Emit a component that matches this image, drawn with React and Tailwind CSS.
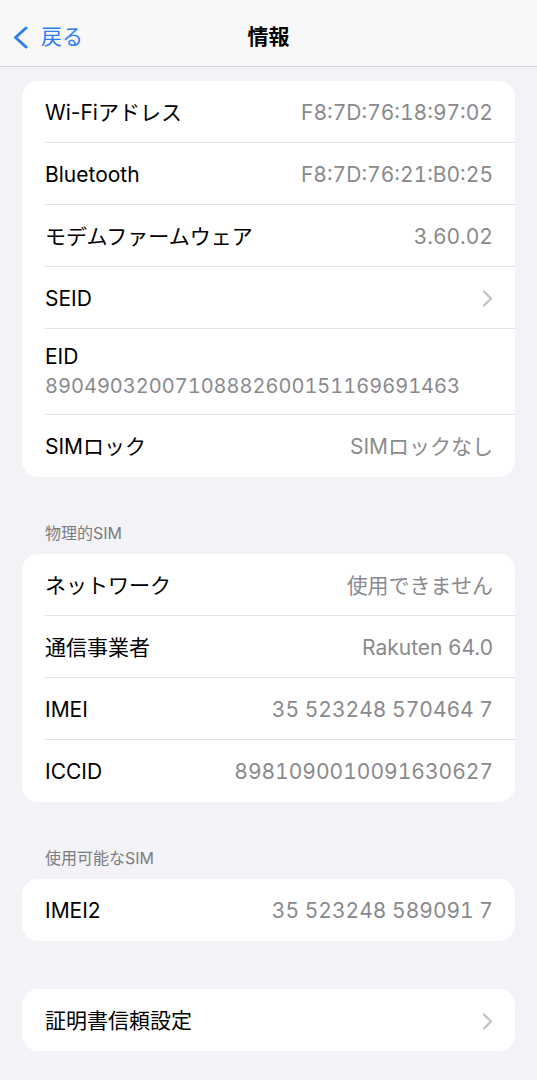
import { Fragment } from "react"

const FONT = { fontFamily: '"Inter", "Noto Sans CJK JP", sans-serif' }

const Chevron = () => (
  <svg width="11" height="17" viewBox="0 0 11 17" fill="none">
    <path d="M2 1.5 L9 8.5 L2 15.5" stroke="#c4c4c7" strokeWidth="2.4" strokeLinecap="round" strokeLinejoin="round" />
  </svg>
)

const Row = ({ label, value, chevron, mono, last }) => (
  <div className="pl-[23px]">
    <div className={`h-[62px] pt-[2px] flex items-center justify-between pr-[22px] ${last ? "" : "border-b border-[#e2e2e6]"}`}>
      <span className="text-[21px] text-black">{label}</span>
      {chevron ? (
        <Chevron />
      ) : (
        <span className={`text-[21px] text-[#8a8a8e] ${mono ? "tabular-nums" : ""}`}>{value}</span>
      )}
    </div>
  </div>
)

const Card = ({ children, className = "" }) => (
  <div className={`mx-[22px] bg-white rounded-[16px] overflow-hidden ${className}`}>{children}</div>
)

const SectionTitle = ({ children }) => (
  <p className="mt-[46px] mb-[11px] px-[45px] text-[16px] leading-[20px] text-[#7c7c80]">{children}</p>
)

const physical = [
  { label: "ネットワーク", value: "使用できません" },
  { label: "通信事業者", value: "Rakuten 64.0" },
  { label: "IMEI", value: "35 523248 570464 7", mono: true },
  { label: "ICCID", value: "8981090010091630627", mono: true },
]

export default function App() {
  return (
    <div className="min-h-[1080px] bg-[#f2f2f7] pb-[31px]" style={FONT}>
      <div className="relative h-[67px] pt-[8px] bg-[#f8f8f9] border-b border-[#d3d3d8] flex items-center">
        <div className="flex items-center pl-[12px] gap-[12px] text-[#2f7cf6]">
          <svg width="17" height="23" viewBox="0 0 17 23" fill="none">
            <path d="M14 2 L3.5 11.5 L14 21" stroke="#2f7cf6" strokeWidth="3" strokeLinecap="round" strokeLinejoin="round" />
          </svg>
          <span className="text-[21px]">戻る</span>
        </div>
        <p className="absolute inset-x-0 text-center text-[21px] font-bold text-black pointer-events-none">情報</p>
      </div>

      <Card className="mt-[14px]">
        <Row label="Wi-Fiアドレス" value="F8:7D:76:18:97:02" mono />
        <Row label="Bluetooth" value="F8:7D:76:21:B0:25" mono />
        <Row label="モデムファームウェア" value="3.60.02" mono />
        <Row label="SEID" chevron />
        <div className="pl-[23px]">
          <div className="h-[86px] pt-[14px] border-b border-[#e2e2e6] pr-[22px]">
            <p className="text-[21px] leading-[28px] text-black">EID</p>
            <p className="text-[20px] leading-[30px] text-[#8a8a8e] tabular-nums">89049032007108882600151169691463</p>
          </div>
        </div>
        <Row label="SIMロック" value="SIMロックなし" last />
      </Card>

      <SectionTitle>物理的SIM</SectionTitle>
      <Card>
        {physical.map((r, i) => (
          <Fragment key={r.label}>
            <Row {...r} last={i === physical.length - 1} />
          </Fragment>
        ))}
      </Card>

      <SectionTitle>使用可能なSIM</SectionTitle>
      <Card>
        <Row label="IMEI2" value="35 523248 589091 7" mono last />
      </Card>

      <Card className="mt-[48px]">
        <Row label="証明書信頼設定" chevron last />
      </Card>
    </div>
  )
}
